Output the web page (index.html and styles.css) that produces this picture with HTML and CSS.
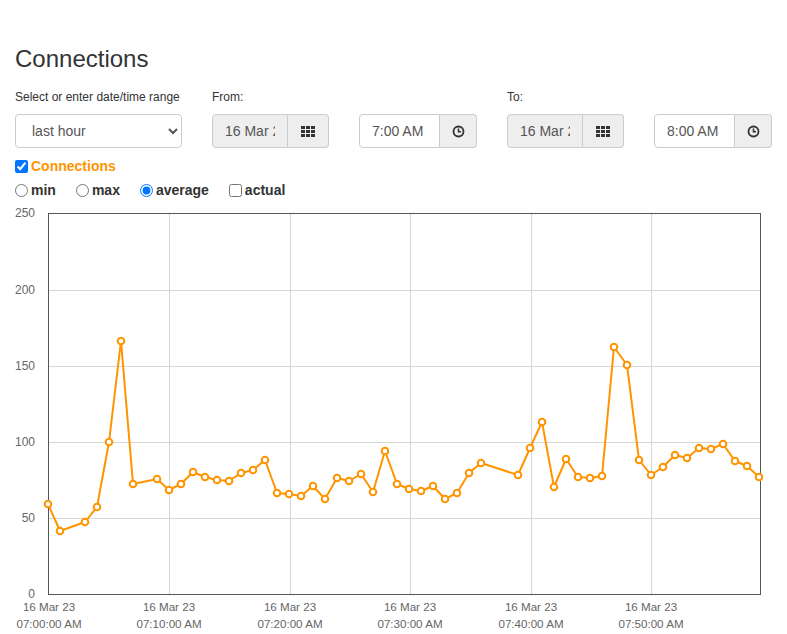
FILE: index.html
```html
<!DOCTYPE html>
<html lang="en">
<head>
<meta charset="utf-8">
<title>Connections</title>
<link rel="stylesheet" href="styles.css">
</head>
<body>
<div class="page">
  <h1 class="title">Connections</h1>
  <div class="filters">
    <div class="field field-range">
      <label class="field-label">Select or enter date/time range</label>
      <select class="select">
        <option>last hour</option>
      </select>
    </div>
    <div class="field field-date">
      <label class="field-label">From:</label>
      <div class="group">
        <input class="group-input group-input-date" type="text" value="16 Mar 2023" readonly>
        <span class="addon addon-date">
          <svg width="14" height="11" viewBox="0 0 14 11"><g fill="#333"><rect x="0" y="0" width="4" height="3"/><rect x="5" y="0" width="4" height="3"/><rect x="10" y="0" width="4" height="3"/><rect x="0" y="4" width="4" height="3"/><rect x="5" y="4" width="4" height="3"/><rect x="10" y="4" width="4" height="3"/><rect x="0" y="8" width="4" height="3"/><rect x="5" y="8" width="4" height="3"/><rect x="10" y="8" width="4" height="3"/></g></svg>
        </span>
      </div>
    </div>
    <div class="field field-time">
      <label class="field-label">&nbsp;</label>
      <div class="group">
        <input class="group-input" type="text" value="7:00 AM">
        <span class="addon addon-time">
          <svg width="13" height="13" viewBox="0 0 13 13"><circle cx="6.5" cy="6.5" r="5" fill="none" stroke="#333" stroke-width="1.8"/><path d="M6.5 3.5 V6.8 H9" fill="none" stroke="#333" stroke-width="1.6"/></svg>
        </span>
      </div>
    </div>
    <div class="field field-date">
      <label class="field-label">To:</label>
      <div class="group">
        <input class="group-input group-input-date" type="text" value="16 Mar 2023" readonly>
        <span class="addon addon-date">
          <svg width="14" height="11" viewBox="0 0 14 11"><g fill="#333"><rect x="0" y="0" width="4" height="3"/><rect x="5" y="0" width="4" height="3"/><rect x="10" y="0" width="4" height="3"/><rect x="0" y="4" width="4" height="3"/><rect x="5" y="4" width="4" height="3"/><rect x="10" y="4" width="4" height="3"/><rect x="0" y="8" width="4" height="3"/><rect x="5" y="8" width="4" height="3"/><rect x="10" y="8" width="4" height="3"/></g></svg>
        </span>
      </div>
    </div>
    <div class="field field-time">
      <label class="field-label">&nbsp;</label>
      <div class="group">
        <input class="group-input" type="text" value="8:00 AM">
        <span class="addon addon-time">
          <svg width="13" height="13" viewBox="0 0 13 13"><circle cx="6.5" cy="6.5" r="5" fill="none" stroke="#333" stroke-width="1.8"/><path d="M6.5 3.5 V6.8 H9" fill="none" stroke="#333" stroke-width="1.6"/></svg>
        </span>
      </div>
    </div>
  </div>

  <div class="series-row">
    <label class="opt"><input type="checkbox" checked><span class="series-name">Connections</span></label>
  </div>
  <div class="mode-row">
    <label class="opt"><input type="radio" name="mode"><span>min</span></label>
    <label class="opt"><input type="radio" name="mode"><span>max</span></label>
    <label class="opt"><input type="radio" name="mode" checked><span>average</span></label>
    <label class="opt"><input type="checkbox"><span>actual</span></label>
  </div>

  <svg class="chart" width="757" height="434" viewBox="15 200 757 434">
    <g class="grid" stroke="#d6d6d6" stroke-width="1">
      <line x1="48" y1="290.5" x2="760" y2="290.5"/>
      <line x1="48" y1="366.5" x2="760" y2="366.5"/>
      <line x1="48" y1="442.5" x2="760" y2="442.5"/>
      <line x1="48" y1="518.5" x2="760" y2="518.5"/>
      <line x1="169.5" y1="213" x2="169.5" y2="594"/>
      <line x1="290.5" y1="213" x2="290.5" y2="594"/>
      <line x1="410.5" y1="213" x2="410.5" y2="594"/>
      <line x1="531.5" y1="213" x2="531.5" y2="594"/>
      <line x1="651.5" y1="213" x2="651.5" y2="594"/>
    </g>
    <rect x="48.5" y="213.5" width="712" height="381" fill="none" stroke="#555" stroke-width="1"/>
    <g class="ylab" fill="#666" font-size="12" text-anchor="end">
      <text x="35" y="217">250</text>
      <text x="35" y="294">200</text>
      <text x="35" y="370">150</text>
      <text x="35" y="446">100</text>
      <text x="35" y="522">50</text>
      <text x="35" y="598">0</text>
    </g>
    <g class="xlab" fill="#666" font-size="11.6" text-anchor="middle">
      <text x="49" y="611">16 Mar 23</text><text x="49" y="628">07:00:00 AM</text>
      <text x="169" y="611">16 Mar 23</text><text x="169" y="628">07:10:00 AM</text>
      <text x="290" y="611">16 Mar 23</text><text x="290" y="628">07:20:00 AM</text>
      <text x="410" y="611">16 Mar 23</text><text x="410" y="628">07:30:00 AM</text>
      <text x="531" y="611">16 Mar 23</text><text x="531" y="628">07:40:00 AM</text>
      <text x="651" y="611">16 Mar 23</text><text x="651" y="628">07:50:00 AM</text>
    </g>
    <polyline fill="none" stroke="#ff9400" stroke-width="2" stroke-linejoin="round" points="48,504 60,531 85,522 97,507 109,442 121,341 133,484 157,479 169,490 181,484 193,472 205,477 217,480 229,481 241,473 253,470 265,460 277,493 289,494 301,496 313,486 325,499 337,478 349,481 361,474 373,492 385,451 397,484 409,489 421,491 433,486 445,499 457,493 469,473 481,463 518,475 530,448 542,422 554,487 566,459 578,477 590,478 602,476 614,347 627,365 639,460 651,475 663,467 675,455 687,458 699,448 711,449 723,444 735,461 747,466 759,477"/>
    <g fill="#fff" stroke="#ff9400" stroke-width="2">
      <circle cx="48" cy="504" r="3.3"/><circle cx="60" cy="531" r="3.3"/><circle cx="85" cy="522" r="3.3"/><circle cx="97" cy="507" r="3.3"/><circle cx="109" cy="442" r="3.3"/><circle cx="121" cy="341" r="3.3"/><circle cx="133" cy="484" r="3.3"/><circle cx="157" cy="479" r="3.3"/><circle cx="169" cy="490" r="3.3"/><circle cx="181" cy="484" r="3.3"/><circle cx="193" cy="472" r="3.3"/><circle cx="205" cy="477" r="3.3"/><circle cx="217" cy="480" r="3.3"/><circle cx="229" cy="481" r="3.3"/><circle cx="241" cy="473" r="3.3"/><circle cx="253" cy="470" r="3.3"/><circle cx="265" cy="460" r="3.3"/><circle cx="277" cy="493" r="3.3"/><circle cx="289" cy="494" r="3.3"/><circle cx="301" cy="496" r="3.3"/><circle cx="313" cy="486" r="3.3"/><circle cx="325" cy="499" r="3.3"/><circle cx="337" cy="478" r="3.3"/><circle cx="349" cy="481" r="3.3"/><circle cx="361" cy="474" r="3.3"/><circle cx="373" cy="492" r="3.3"/><circle cx="385" cy="451" r="3.3"/><circle cx="397" cy="484" r="3.3"/><circle cx="409" cy="489" r="3.3"/><circle cx="421" cy="491" r="3.3"/><circle cx="433" cy="486" r="3.3"/><circle cx="445" cy="499" r="3.3"/><circle cx="457" cy="493" r="3.3"/><circle cx="469" cy="473" r="3.3"/><circle cx="481" cy="463" r="3.3"/><circle cx="518" cy="475" r="3.3"/><circle cx="530" cy="448" r="3.3"/><circle cx="542" cy="422" r="3.3"/><circle cx="554" cy="487" r="3.3"/><circle cx="566" cy="459" r="3.3"/><circle cx="578" cy="477" r="3.3"/><circle cx="590" cy="478" r="3.3"/><circle cx="602" cy="476" r="3.3"/><circle cx="614" cy="347" r="3.3"/><circle cx="627" cy="365" r="3.3"/><circle cx="639" cy="460" r="3.3"/><circle cx="651" cy="475" r="3.3"/><circle cx="663" cy="467" r="3.3"/><circle cx="675" cy="455" r="3.3"/><circle cx="687" cy="458" r="3.3"/><circle cx="699" cy="448" r="3.3"/><circle cx="711" cy="449" r="3.3"/><circle cx="723" cy="444" r="3.3"/><circle cx="735" cy="461" r="3.3"/><circle cx="747" cy="466" r="3.3"/><circle cx="759" cy="477" r="3.3"/>
    </g>
  </svg>
</div>
</body>
</html>
```
FILE: styles.css
```css
* { box-sizing: border-box; }
html, body { margin: 0; padding: 0; background: #fff; }
body {
  font-family: "Liberation Sans", Arial, Helvetica, sans-serif;
  font-size: 14px;
  color: #333;
}
.page { padding: 46px 15px 0; }
.title {
  font-size: 24px;
  font-weight: 400;
  line-height: 26px;
  margin: 0 0 17px;
  color: #333;
}
.filters { display: flex; gap: 30px; }
.field { display: flex; flex-direction: column; }
.field-range { width: 167px; }
.field-date { width: 117px; }
.field-time { width: 118px; }
.field-label {
  display: block;
  font-size: 12px;
  line-height: 17px;
  height: 17px;
  margin-bottom: 8px;
  color: #333;
  white-space: nowrap;
}
.select {
  height: 34px;
  width: 167px;
  border: 1px solid #ccc;
  border-radius: 4px;
  padding: 6px 12px;
  font: 14px "Liberation Sans", Arial, sans-serif;
  color: #555;
  background: #fff;
}
.group { display: flex; height: 34px; }
.group-input {
  flex: 1;
  min-width: 0;
  height: 34px;
  border: 1px solid #ccc;
  border-radius: 4px 0 0 4px;
  padding: 6px 12px;
  font: 14px "Liberation Sans", Arial, sans-serif;
  color: #555;
  background: #fff;
  outline: none;
}
.group-input-date { background: #eee; }
.addon {
  display: flex;
  align-items: center;
  justify-content: center;
  height: 34px;
  border: 1px solid #ccc;
  border-left: 0;
  border-radius: 0 4px 4px 0;
  background: #eee;
}
.addon-date { width: 41px; flex: none; }
.addon-time { width: 37px; flex: none; }
.addon svg { display: block; }
.series-row { margin-top: 8px; height: 20px; display: flex; align-items: center; }
.mode-row { margin-top: 4px; height: 20px; display: flex; align-items: center; gap: 20px; }
.opt {
  display: flex;
  align-items: center;
  font-weight: 700;
  font-size: 14px;
  line-height: 20px;
  color: #333;
}
.opt input { margin: 0 3px 0 0; width: 13px; height: 13px; }
.series-name { color: #ff9400; }
.chart { display: block; font-family: "Liberation Sans", Arial, sans-serif; }
```
